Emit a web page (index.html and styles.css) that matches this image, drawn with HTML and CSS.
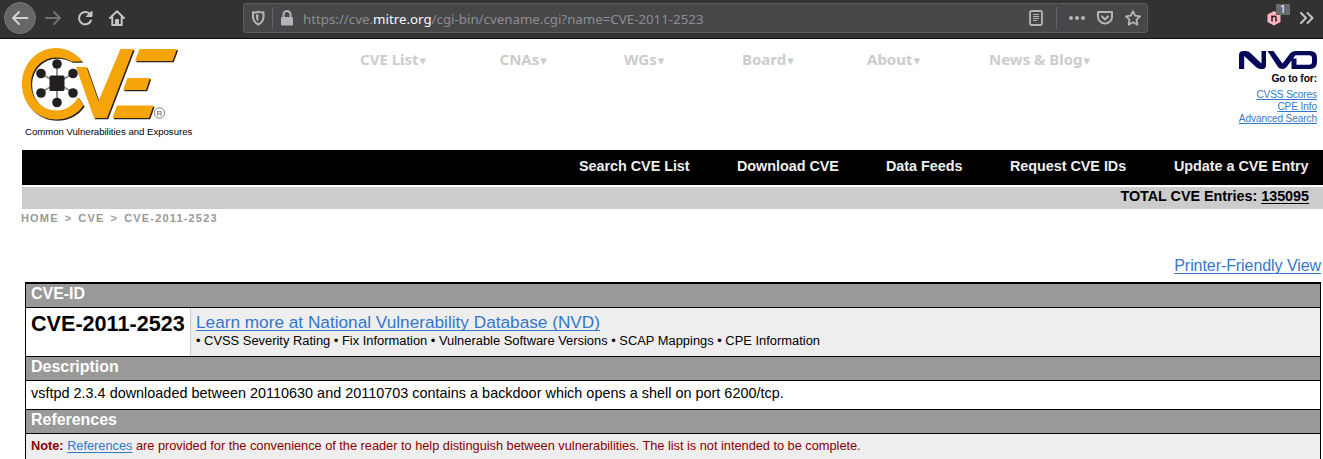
FILE: index.html
```html
<!DOCTYPE html>
<html lang="en">
<head>
<meta charset="utf-8">
<title>CVE - CVE-2011-2523</title>
<link rel="stylesheet" href="styles.css">
</head>
<body>
<div class="toolbar">
  <svg class="nav-icons" width="130" height="38" viewBox="0 0 130 38" fill="none" stroke="#d2d2d3" stroke-width="2" stroke-linecap="round" stroke-linejoin="round">
    <circle cx="20" cy="18" r="15.5" fill="#666667" stroke="#777778" stroke-width="1"/>
    <path d="M27.5 18H13M19 12l-6 6 6 6"/>
    <path stroke="#727273" d="M46 18h14M54 12l6 6-6 6"/>
    <path d="M90.300 14.500A6.200 6.200 0 1 0 91 20.500" stroke="#c5c5c6"/>
    <path d="M92 11.500v5h-5.500z" fill="#c5c5c6" stroke="#c5c5c6" stroke-width="1"/>
    <path d="M110 18l7-6.700 7 6.700M112.300 17v8h9.400v-8" stroke="#c5c5c6"/>
    <path d="M115.500 24.500v-5h3v5z" fill="#c5c5c6" stroke="#c5c5c6" stroke-width="1"/>
  </svg>
  <div class="urlbar">
    <svg class="url-left" width="54" height="28" viewBox="0 0 54 28" fill="none">
      <path d="M9 8.200Q12.500 8.800 14.300 7.600Q16.500 8.800 19.500 8.200V13Q19.200 18 14.300 20.500Q9.300 18 9 13Z" stroke="#b5b5b7" stroke-width="2" stroke-linejoin="round"/>
      <path d="M12 10.500l2.300-.5v7.500Q12 16 12 13z" fill="#b5b5b7"/>
      <path d="M28.500 3v22" stroke="#5d6570"/>
      <rect x="37" y="13" width="12" height="8.500" rx="1" fill="#b5b5b7"/>
      <path d="M39.500 13v-2.500a3.500 3.500 0 0 1 7 0V13" stroke="#b5b5b7" stroke-width="2"/>
    </svg>
    <div class="url"><span>https://cve.</span><b>mitre.org</b><span>/cgi-bin/cvename.cgi?name=CVE-2011-2523</span></div>
    <svg class="url-right" width="123" height="28" viewBox="0 0 123 28" fill="none" stroke="#b5b5b7" stroke-width="2" stroke-linejoin="round" stroke-linecap="round">
      <rect x="6" y="7" width="12" height="14" rx="1.500" stroke-width="1.800"/>
      <path d="M9 10.500h6M9 12.500h6M9 14.500h6M9 16.500h4" stroke-width="1" stroke-linecap="butt"/>
      <path d="M32.500 3v22" stroke="#5d6570" stroke-width="1"/>
      <g fill="#b5b5b7" stroke="none"><circle cx="47" cy="14" r="2"/><circle cx="53" cy="14" r="2"/><circle cx="59" cy="14" r="2"/></g>
      <path d="M74 8h14v5a7 6.500 0 0 1-14 0z"/><path d="M78 12.500l3 3 3-3"/>
      <path d="M109 7.200l2.100 4.500 5 .6-3.600 3.400.9 4.900-4.400-2.400-4.400 2.400.9-4.900-3.600-3.400 5-.6z" stroke-width="1.800"/>
    </svg>
  </div>
  <svg class="extensions" width="65" height="38" viewBox="0 0 65 38">
    <path d="M16 11l6.500 3.500v7.500L16 25.500l-6.500-3.500v-7.500z" fill="#ffb3be"/>
    <path d="M14 21.500v-6M14 17q4-2 4 1v3.500" fill="none" stroke="#2e1c25" stroke-width="1.500"/>
    <rect x="18" y="4" width="14" height="11" fill="#6b6b6c"/>
    <text x="22" y="13" class="badge">1</text>
    <path d="M43 13l5 5-5 5M49.500 13l5 5-5 5" fill="none" stroke="#c5c5c6" stroke-width="2" stroke-linecap="round" stroke-linejoin="round"/>
  </svg>
</div>

<header class="header">
  <div class="brand">
    <svg width="160" height="76" viewBox="20 46 160 76" role="img" aria-label="CVE">
      <defs>
        <g id="mark">
          <path d="M82 61.500C76 53 66 48 56.500 48C37 48 22 64 22 84C22 104 37 119.500 56 119.500C67 119.500 77 115 83.500 105.500L78 97C74 105 66 110.500 57 110.500C42 110.500 31 99 31 84C31 69 42 57.500 56 57.500C62 57.500 67 59 71.500 61.500Z"/>
          <path d="M76 67H86.500L98.500 101L120.500 49H133.500L107 118H94Z"/>
          <path d="M139.500 49H177L172.500 61H135ZM127.500 78H150L146 90H123ZM117 105.500H153.500L149 118H112.500Z"/>
        </g>
      </defs>
      <use href="#mark" x="1.200" y="1.200" fill="#29221f"/>
      <use href="#mark" fill="#f5a50a"/>
      <g stroke="#8b8b8d" stroke-width="1.800"><path d="M57 64v38M41 73.500l32 19M41 92.500l32-19"/></g>
      <g fill="#231f20"><circle cx="57" cy="64" r="4.800"/><circle cx="57" cy="102.500" r="4.800"/><circle cx="41" cy="73.500" r="4.800"/><circle cx="73" cy="73.500" r="4.800"/><circle cx="41" cy="93" r="4.800"/><circle cx="73" cy="93" r="4.800"/><rect x="49.500" y="75.500" width="15" height="15.500" rx="1.500"/></g>
      <circle cx="159.500" cy="113" r="5.200" fill="none" stroke="#666" stroke-width=".8"/>
      <text x="156.600" y="116.200" class="registered">R</text>
    </svg>
    <div class="tagline">Common Vulnerabilities and Exposures</div>
  </div>
  <nav class="menu">
    <span class="m1">CVE List<i>▾</i></span><span class="m2">CNAs<i>▾</i></span><span class="m3">WGs<i>▾</i></span><span class="m4">Board<i>▾</i></span><span class="m5">About<i>▾</i></span><span class="m6">News &amp; Blog<i>▾</i></span>
  </nav>
  <div class="nvd">
    <svg width="80" height="20" viewBox="0 0 80 20" fill="#07075a" role="img" aria-label="NVD">
      <path d="M1 19V5Q1 1 5.500 1H8Q10.500 1 12.500 3L23.500 13.500V1H28V15Q28 19 24.500 19H22.500Q20 19 18 17L6.200 6V19Z"/>
      <path d="M29.500 1H35.500L44.500 13.500L52 3.500Q54 1 57 1H72Q79 1 79 8V12Q79 19 72 19H53.500V8.500H58.500V14.800H71Q74 14.800 74 12V8Q74 5.200 71 5.200H57.500L48.500 17Q47 19 44.500 19Q41.500 19 40 17Z"/>
    </svg>
    <strong>Go to for:</strong>
    <a>CVSS Scores</a><a>CPE Info</a><a class="adv">Advanced Search</a>
  </div>
</header>

<nav class="actions"><a class="a1">Search CVE List</a><a class="a2">Download CVE</a><a class="a3">Data Feeds</a><a class="a4">Request CVE IDs</a><a class="a5">Update a CVE Entry</a></nav>
<div class="total"><span>TOTAL CVE Entries: <a>135095</a></span></div>
<div class="crumbs"><span>HOME</span><i>&gt;</i><span>CVE</span><i>&gt;</i><span>CVE-2011-2523</span></div>
<div class="printer"><a>Printer-Friendly View</a></div>

<main class="record">
  <h2>CVE-ID</h2>
  <section class="identity">
    <div class="id"><h1>CVE-2011-2523</h1></div>
    <div class="learn"><a>Learn more at National Vulnerability Database (NVD)</a>
      <p>• CVSS Severity Rating • Fix Information • Vulnerable Software Versions • SCAP Mappings • CPE Information</p></div>
  </section>
  <h2>Description</h2>
  <section class="description"><span>vsftpd 2.3.4 downloaded between 20110630 and 20110703 contains a backdoor which opens a shell on port 6200/tcp.</span></section>
  <h2>References</h2>
  <section class="note"><span><b>Note:</b> <a>References</a> are provided for the convenience of the reader to help distinguish between vulnerabilities. The list is not intended to be complete.</span></section>
</main>
</body>
</html>
```

FILE: styles.css
```css
* { box-sizing: border-box; }
body { margin: 0; height: 459px; overflow: hidden; background: #fff; color: #000; font-family: "Liberation Sans", Arial, sans-serif; }
svg { display: block; flex: none; }
h1, h2, p { margin: 0; }
i { font-style: normal; }
a { color: #3377cc; text-decoration: underline; text-underline-offset: 2px; text-decoration-skip-ink: none; }

.toolbar { display: flex; height: 39px; background: #323234; border-bottom: 1px solid #0c0c0d; }
.urlbar { display: flex; width: 905px; height: 30px; margin: 3px 0 0 113px; background: #474749; border: 1px solid #5c5c5e; border-radius: 3px; }
.url { flex: 1; padding-left: 5px; font: 13.300px/31px "Noto Sans", sans-serif; color: #8e8e90; white-space: pre; }
.url b { font-weight: 400; color: #f9f9fa; }
.extensions { margin-left: 110px; }
.badge { font: 10px "Noto Sans", sans-serif; fill: #fff; }

.header { display: flex; height: 111px; }
.brand { width: 338px; padding: 7px 0 0 20px; flex: none; }
.tagline { margin: 4px 0 0 5px; font-size: 9.600px; line-height: 12px; letter-spacing: -.01px; white-space: nowrap; }
.registered { font: 8px "Liberation Sans", sans-serif; fill: #555; }
.menu { display: flex; width: 870px; padding: 10px 0 0 22px; font: bold 15px/20px "Noto Sans", sans-serif; color: #ccc; white-space: nowrap; }
.menu i { margin-left: 1px; font: 13px/10px "DejaVu Sans", sans-serif; }
.m1 { width: 139.500px; }
.m2 { width: 124.500px; }
.m3 { width: 118px; }
.m4 { width: 125px; }
.m5 { width: 122px; }
.nvd { display: flex; flex-direction: column; align-items: flex-end; width: 109px; padding-top: 11px; font-size: 10.200px; line-height: 12px; white-space: nowrap; }
.nvd svg { margin-right: -1px; }
.nvd strong { margin: 3px 0 4px; letter-spacing: -.08px; }
.nvd a { text-underline-offset: 1px; letter-spacing: -.1px; font-size: 10.100px; }

.actions { display: flex; height: 35px; margin-left: 22px; padding-left: 557px; background: #000; font: bold 14.400px/32px "Liberation Sans", sans-serif; letter-spacing: -.04px; white-space: nowrap; }
.actions a { color: #eee; text-decoration: none; }
.a1 { width: 158px; }
.a2 { width: 149px; }
.a3 { width: 124px; }
.a4 { width: 164px; }
.total { height: 22px; margin: 2px 0 0 22px; padding-right: 14px; background: #ccc; font: bold 14.400px/19px "Liberation Sans", sans-serif; letter-spacing: -.04px; text-align: right; }
.total a { color: #000; }
.crumbs { display: flex; gap: 6px; height: 43px; padding: 3px 0 0 21px; font: bold 11px/12px "Liberation Sans", sans-serif; letter-spacing: 1.180px; color: #999; }
.printer { height: 30px; padding: 4px 2px 0; font-size: 16px; line-height: 19px; letter-spacing: -.07px; text-align: right; }

.record { width: 1296px; margin-left: 25px; border: 1px solid #000; border-top-width: 2px; border-bottom: 0; }
.record h2 { height: 24px; padding-left: 5px; background: #999; border-bottom: 1px solid #000; color: #fff; font-size: 16px; line-height: 20px; letter-spacing: -.03px; }
.identity { display: flex; height: 49px; border-bottom: 1px solid #000; }
.id { width: 165px; padding-left: 5px; border-right: 1px solid #ccc; }
.id h1 { font-size: 21.600px; line-height: 32px; white-space: nowrap; }
.learn { flex: 1; padding: 4px 0 0 5px; background: #eee; font-size: 17.200px; line-height: 20px; letter-spacing: .01px; white-space: nowrap; }
.learn p { font-size: 12.880px; line-height: 17px; }
.description { height: 29px; padding-left: 5px; border-bottom: 1px solid #000; font-size: 14.400px; line-height: 25px; letter-spacing: .018px; white-space: nowrap; }
.note { height: 26px; padding-left: 5px; background: #eee; color: #8b0000; font-size: 12.800px; line-height: 24px; letter-spacing: -.021px; white-space: nowrap; }
```
